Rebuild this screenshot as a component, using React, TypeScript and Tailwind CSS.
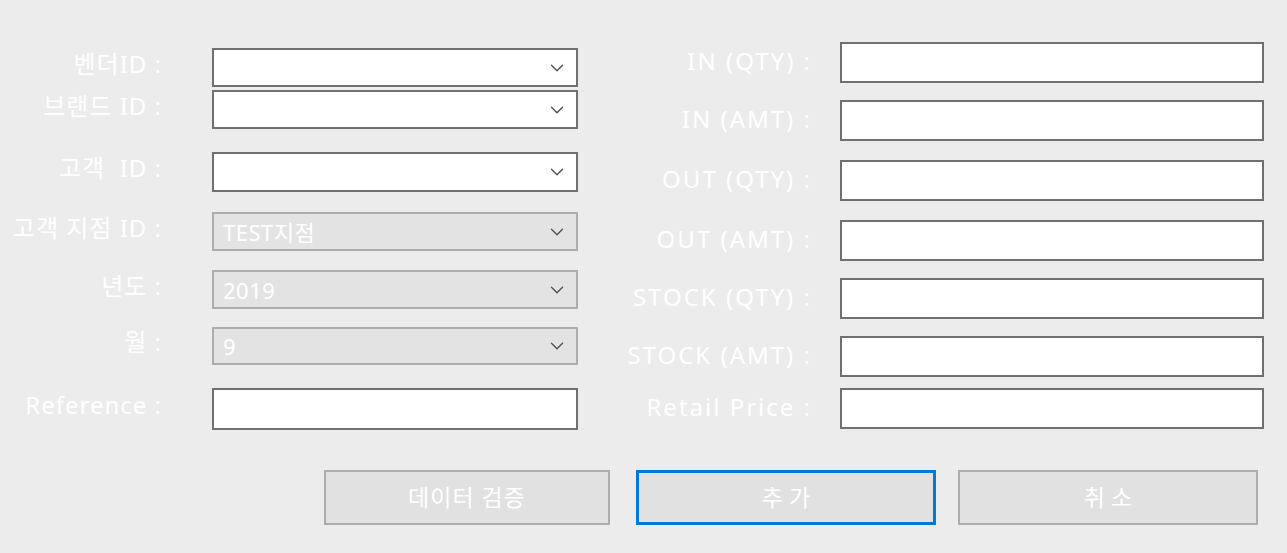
import { ChevronDown } from "lucide-react";

const font = { fontFamily: '"Noto Sans", "Noto Sans CJK KR", sans-serif' };

type Row = { label: string; top: string; h: string; kind: "select" | "disabled" | "input"; value?: string };

const leftRows: Row[] = [
  { label: "벤더ID :", top: "mt-[48px]", h: "h-[39px]", kind: "select" },
  { label: "브랜드 ID :", top: "mt-[3px]", h: "h-[39px]", kind: "select" },
  { label: "고객  ID :", top: "mt-[23px]", h: "h-[40px]", kind: "select" },
  { label: "고객 지점 ID :", top: "mt-[20px]", h: "h-[39px]", kind: "disabled", value: "TEST지점" },
  { label: "년도 :", top: "mt-[19px]", h: "h-[39px]", kind: "disabled", value: "2019" },
  { label: "월 :", top: "mt-[18px]", h: "h-[38px]", kind: "disabled", value: "9" },
  { label: "Reference :", top: "mt-[23px]", h: "h-[42px]", kind: "input" },
];

const rightRows = [
  { label: "IN (QTY) :", top: "mt-[42px]" },
  { label: "IN (AMT) :", top: "mt-[17px]" },
  { label: "OUT (QTY) :", top: "mt-[19px]" },
  { label: "OUT (AMT) :", top: "mt-[19px]" },
  { label: "STOCK (QTY) :", top: "mt-[17px]" },
  { label: "STOCK (AMT) :", top: "mt-[17px]" },
  { label: "Retail Price :", top: "mt-[11px]" },
];

function Field({ row }: { row: Row }) {
  if (row.kind === "input") {
    return <div className={`w-[366px] ${row.h} bg-white border-2 border-[#707070]`} />;
  }
  const disabled = row.kind === "disabled";
  return (
    <div
      className={`w-[366px] ${row.h} flex items-center justify-between pl-[9px] pr-[8px] border-2 ${
        disabled ? "bg-[#e3e3e3] border-[#adadad]" : "bg-white border-[#707070]"
      }`}
    >
      <span className="text-white text-[22px] leading-none tracking-[0.5px]">{row.value}</span>
      <ChevronDown size={22} strokeWidth={1.5} className="text-[#505050]" />
    </div>
  );
}

export default function App() {
  return (
    <div className="w-[1287px] h-[553px] bg-[#ececec] overflow-hidden" style={font}>
      <div className="flex">
        <div className="flex flex-col w-[578px]">
          {leftRows.map((r) => (
            <div key={r.label} className={`flex items-center ${r.top}`}>
              <div className="w-[162px] text-right text-white text-[24px] leading-none tracking-[1px] whitespace-pre -mt-[8px]">
                {r.label}
              </div>
              <div className="ml-[50px]">
                <Field row={r} />
              </div>
            </div>
          ))}
        </div>
        <div className="flex flex-col">
          {rightRows.map((r) => (
            <div key={r.label} className={`flex items-center ${r.top}`}>
              <div className="w-[234px] text-right text-white text-[24px] leading-none tracking-[2px] whitespace-pre -mt-[4px]">
                {r.label}
              </div>
              <div className="ml-[28px] w-[424px] h-[41px] bg-white border-2 border-[#707070]" />
            </div>
          ))}
        </div>
      </div>
      <div className="flex mt-[40px] ml-[324px]">
        <button className="w-[286px] h-[55px] bg-[#e1e1e1] border-2 border-[#adadad] text-white text-[23px] tracking-[1px]">
          데이터 검증
        </button>
        <button className="ml-[26px] w-[300px] h-[55px] bg-[#e1e1e1] border-[3px] border-[#0078d7] text-white text-[23px]">
          추 가
        </button>
        <button className="ml-[22px] w-[300px] h-[55px] bg-[#e1e1e1] border-2 border-[#adadad] text-white text-[23px]">
          취 소
        </button>
      </div>
    </div>
  );
}
